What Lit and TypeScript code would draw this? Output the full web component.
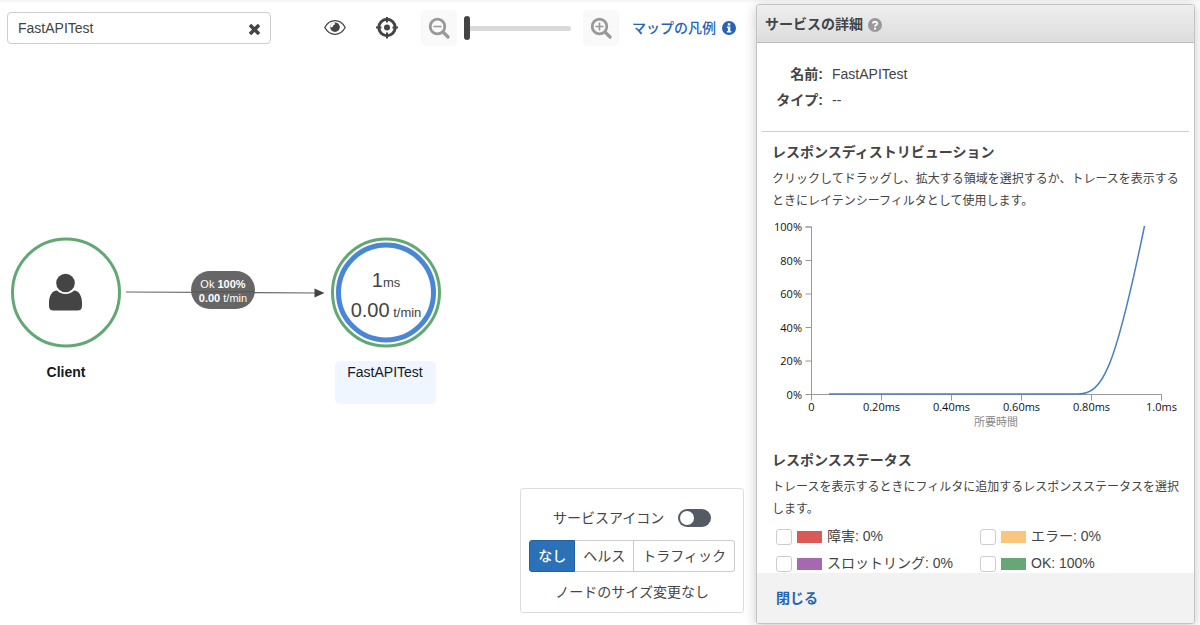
import { LitElement, html, css, svg } from "lit";
import { customElement, state } from "lit/decorators.js";
import { classMap } from "lit/directives/class-map.js";

const base = css`
  :host {
    display: block;
    box-sizing: border-box;
    font-family: "Liberation Sans", "Noto Sans CJK JP", sans-serif;
    font-size: 14px;
    line-height: 20px;
    color: #444;
  }
  *, *::before, *::after { box-sizing: border-box; }
  button { font: inherit; color: inherit; background: none; border: 0; padding: 0; margin: 0; cursor: pointer; }
  a { color: #2563b5; text-decoration: none; }
  svg { display: block; }
`;

@customElement("map-toolbar")
class MapToolbar extends LitElement {
  static styles = [base, css`
    .bar { display: flex; align-items: center; justify-content: space-between; gap: 16px; padding: 10px 20px 0 7px; }
    .search { display: flex; align-items: center; flex: 0 1 264px; min-width: 120px; height: 32px; padding: 0 10px; border: 1px solid #ccc; border-radius: 4px; background: #fff; }
    .search input { flex: 1; min-width: 0; border: 0; outline: 0; padding: 0; font: inherit; color: #444; background: none; }
    .clear { padding-top: 2px; }
    .tools { display: flex; align-items: center; }
    .view { display: flex; gap: 30px; margin-right: 23px; }
    .zoom { display: grid; place-items: center; width: 36px; height: 36px; border-radius: 5px; background: #f9f9f9; }
    .slider { appearance: none; width: 107px; height: 24px; margin: 0 12px 0 7px; background: none; }
    .slider::-webkit-slider-runnable-track { height: 5px; border-radius: 3px; background: #d9d9d9; }
    .slider::-webkit-slider-thumb { appearance: none; width: 6px; height: 24px; margin-top: -10px; border-radius: 3px; background: #444; }
    .legend { display: flex; align-items: center; gap: 6px; margin-left: 13px; white-space: nowrap; font-weight: 500; }
  `];
  private lens(plus: boolean) {
    return svg`<svg width="22" height="22" viewBox="0 0 22 22" fill="none" stroke="#999" aria-hidden="true">
      <circle cx="9.5" cy="9.5" r="7.3" stroke-width="2.8"/>
      <path d="M15 15L20 20" stroke-width="3.2" stroke-linecap="round"/>
      <path d=${plus ? "M5.5 9.5H13.5M9.5 5.5V13.5" : "M5.5 9.5H13.5"} stroke-width="1.6"/></svg>`;
  }
  render() {
    return html`<div class="bar">
      <div class="search">
        <input type="text" aria-label="サービス" .value=${"FastAPITest"}>
        <button class="clear" aria-label="クリア"><svg width="11" height="11" viewBox="0 0 10 10"><path d="M2 2L8 8M8 2L2 8" stroke="#444" stroke-width="3.2" stroke-linecap="square"/></svg></button>
      </div>
      <div class="tools">
        <div class="view">
          <button aria-label="表示"><svg width="22" height="22" viewBox="0 0 22 22" fill="none">
            <path d="M0.800 10.500C3.400 5.800 7 3.700 11 3.700S18.600 5.800 21.200 10.500C18.600 15.200 15 17.300 11 17.300S3.400 15.200 0.800 10.500Z" stroke="#444" stroke-width="1.3"/>
            <circle cx="11" cy="10.200" r="4.800" fill="#444"/><path d="M11 5.400A4.800 4.800 0 0 0 6.200 10.200H8.600A2.400 2.400 0 0 1 10.600 7.800Z" fill="#fff"/></svg></button>
          <button aria-label="中央に配置"><svg width="22" height="22" viewBox="0 0 22 22" fill="none">
            <circle cx="11" cy="10.500" r="8.200" stroke="#444" stroke-width="3"/>
            <path d="M11 0V5.500M11 15.500V21.500M0 10.500H5.500M16.500 10.500H22" stroke="#444" stroke-width="2"/>
            <circle cx="11" cy="10.500" r="3" fill="#444"/></svg></button>
        </div>
        <button class="zoom" aria-label="縮小">${this.lens(false)}</button>
        <input class="slider" type="range" min="0" max="100" .value=${"0"} aria-label="ズーム">
        <button class="zoom" aria-label="拡大">${this.lens(true)}</button>
        <a class="legend" href="#legend">マップの凡例
          <svg width="14" height="14" viewBox="0 0 14 14" aria-hidden="true"><circle cx="7" cy="7" r="7" fill="#2563b5"/><path d="M5.800 2.300H8.300V4.400H5.800ZM4.900 5.500H8.300V10H9.300V11.500H4.900V10H5.900V7H4.900Z" fill="#fff"/></svg></a>
      </div>
    </div>`;
  }
}

@customElement("service-graph")
class ServiceGraph extends LitElement {
  static styles = [base, css`
    .graph { max-width: 100%; font-size: 14px; }
    .ring { fill: #fff; stroke: #62a774; stroke-width: 3; }
    .inner { fill: #fff; stroke: #4a86d6; stroke-width: 5; }
    .mid { text-anchor: middle; }
    .name { fill: #16191f; }
    .strong { font-weight: 700; }
    .big { font-size: 20px; fill: #444; }
    .unit { font-size: 13px; }
    .edge { font-size: 11px; fill: #fff; }
  `];
  render() {
    return html`<svg class="graph" width="460" height="180" viewBox="0 230 460 180" role="img" aria-label="サービスマップ">
      <path d="M126 292L316 293" stroke="#666" stroke-width="1.200"/>
      <path d="M314.500 288.500L324.500 293L314.500 297.500Z" fill="#444"/>
      <rect x="191" y="271" width="64" height="38" rx="19" fill="#666"/>
      <path d="M192 291.800H254" stroke="#555" stroke-width="1"/>
      <g class="edge mid">
        <text x="223" y="288">Ok <tspan class="strong">100%</tspan></text>
        <text x="223" y="302"><tspan class="strong">0.00</tspan> t/min</text>
      </g>
      <circle class="ring" cx="66" cy="292.500" r="53.500"/>
      <circle cx="65.500" cy="283" r="9.300" fill="#444"/>
      <path d="M57 290.500C59 292.800 62 294 65.500 294S72 292.800 74 290.500C79 290.500 82 296 82 303V306Q82 310.500 77.500 310.500H53.500Q49 310.500 49 306V303C49 296 52 290.500 57 290.500Z" fill="#444"/>
      <text class="mid name strong" x="66" y="377">Client</text>
      <circle class="ring" cx="386" cy="292.500" r="53.500"/>
      <circle class="inner" cx="386" cy="292.500" r="47.500"/>
      <g class="big mid">
        <text x="386" y="287">1<tspan class="unit">ms</tspan></text>
        <text x="386" y="317">0.00<tspan class="unit"> t/min</tspan></text>
      </g>
      <rect x="335" y="361" width="101" height="43" rx="5" fill="#eff6ff"/>
      <text class="mid name" x="385" y="377">FastAPITest</text>
    </svg>`;
  }
}

@customElement("node-options")
class NodeOptions extends LitElement {
  @state() mode = 0;
  static styles = [base, css`
    .box { display: flex; flex-direction: column; align-items: center; padding: 19px 8px 10px; border: 1px solid #ddd; border-radius: 3px; background: #fff; }
    .row { display: flex; align-items: center; gap: 14px; }
    .switch { appearance: none; width: 33px; height: 18px; margin: 0; padding: 2px; border-radius: 9px; background: #545b64; }
    .switch::before { content: ""; display: block; width: 14px; height: 14px; border-radius: 50%; background: #fff; }
    .switch:checked::before { margin-left: 15px; }
    .group { display: flex; margin: 12px 0 10px; }
    .opt { height: 32px; padding: 0 8px; border: 1px solid #ccc; border-left-width: 0; white-space: nowrap; }
    .opt:first-child { border-left-width: 1px; border-radius: 3px 0 0 3px; }
    .opt:last-child { border-radius: 0 3px 3px 0; }
    .opt.on { background: #2a71b8; border-color: #2460a0; color: #fff; font-weight: 500; }
  `];
  render() {
    return html`<div class="box">
      <div class="row"><label for="icons">サービスアイコン</label><input id="icons" class="switch" type="checkbox" role="switch"></div>
      <div class="group">${["なし", "ヘルス", "トラフィック"].map((t, i) => html`<button class=${classMap({ opt: true, on: i === this.mode })} aria-pressed=${i === this.mode} @click=${() => (this.mode = i)}>${t}</button>`)}</div>
      <div>ノードのサイズ変更なし</div>
    </div>`;
  }
}

@customElement("latency-chart")
class LatencyChart extends LitElement {
  static styles = [base, css`
    .chart { width: 100%; height: auto; font-size: 11px; font-family: "Open Sans", "Noto Sans CJK JP", sans-serif; fill: #111; }
    .axis { fill: none; stroke: #999; }
    .end { text-anchor: end; }
    .mid { text-anchor: middle; }
    .title { fill: #888; }
    .line { fill: none; stroke: #4a80bd; stroke-width: 1.500; }
  `];
  render() {
    const ys = [0, 20, 40, 60, 80, 100];
    const xs = ["0", "0.20ms", "0.40ms", "0.60ms", "0.80ms", "1.0ms"];
    const y = (v: number) => 175.5 - v * 1.675;
    return html`<svg class="chart" viewBox="0 0 412 212" role="img" aria-label="レスポンスディストリビューション">
      <path class="axis" d="M33.500 8H39.500V175.500H389.500V181.500"/>
      ${ys.map((v) => svg`<path class="axis" d="M33.500 ${y(v)}H39.500"/><text class="end" x="30" y=${y(v) + 4}>${v}%</text>`)}
      ${xs.map((t, i) => svg`<path class="axis" d="M${39.5 + i * 70} 175.500V181.500"/><text class="mid" x=${39.5 + i * 70} y="192">${t}</text>`)}
      <path class="line" d="M57 175H306C331 175 343 150 372.500 7"/>
      <text class="mid title" x="224" y="207">所要時間</text>
    </svg>`;
  }
}

@customElement("service-details")
class ServiceDetails extends LitElement {
  static styles = [base, css`
    :host { display: flex; flex-direction: column; min-height: 0; border: 1px solid #c4c4c4; border-radius: 3px; background: #fff; box-shadow: 0 2px 12px rgba(0, 0, 0, 0.22); overflow: hidden; }
    .head { display: flex; align-items: center; gap: 5px; height: 38px; padding: 0 8px; background: linear-gradient(#eee, #ddd); border-bottom: 1px solid #bbb; }
    .help { margin-top: 2px; }
    h2, h3 { margin: 0; font-size: 14px; line-height: 20px; font-weight: 700; }
    .body { flex: 1; min-height: 0; padding: 0 5px; overflow-y: auto; scrollbar-width: none; }
    .facts { display: grid; grid-template-columns: 61px 1fr; column-gap: 9px; margin: 0; padding: 18px 0; line-height: 26px; border-bottom: 1px solid #ccc; }
    .facts dt { text-align: right; font-weight: 700; }
    .facts dd { margin: 0; }
    .section { padding: 10px 5px 0 10px; }
    .section p { margin: 6px 0 7px; font-size: 12px; line-height: 22px; }
    .section + .section { padding-top: 19px; }
    .section .tight { margin-bottom: 3px; }
    .statuses { display: grid; grid-template-columns: 1fr 1fr; padding-left: 4px; line-height: 27px; }
    .status { display: flex; align-items: center; gap: 5px; white-space: nowrap; }
    .status input { appearance: none; width: 16px; height: 16px; margin: 0; border: 1px solid #ccc; border-radius: 3px; background: #fff; }
    .swatch { width: 25px; height: 12px; }
    .red { background: #d95b58; }
    .orange { background: #f8c77d; }
    .purple { background: #a768b2; }
    .green { background: #67a777; }
    .foot { height: 50px; padding: 15px 19px; background: #f2f2f2; }
    .close { color: #2563b5; font-weight: 700; }
  `];
  render() {
    const statuses = [["red", "障害: 0%"], ["orange", "エラー: 0%"], ["purple", "スロットリング: 0%"], ["green", "OK: 100%"]];
    return html`
      <header class="head"><h2>サービスの詳細</h2>
        <svg class="help" width="14" height="14" viewBox="0 0 14 14" aria-hidden="true"><circle cx="7" cy="7" r="7" fill="#999"/><path d="M4.800 5.400C4.900 3.200 9.300 3.100 9.300 5.500C9.300 7.100 7 7 7 8.600" fill="none" stroke="#fff" stroke-width="1.800"/><rect x="6" y="9.700" width="2" height="1.900" fill="#fff"/></svg>
      </header>
      <div class="body">
        <dl class="facts"><dt>名前:</dt><dd>FastAPITest</dd><dt>タイプ:</dt><dd>--</dd></dl>
        <section class="section">
          <h3>レスポンスディストリビューション</h3>
          <p>クリックしてドラッグし、拡大する領域を選択するか、トレースを表示するときにレイテンシーフィルタとして使用します。</p>
          <latency-chart></latency-chart>
        </section>
        <section class="section">
          <h3>レスポンスステータス</h3>
          <p class="tight">トレースを表示するときにフィルタに追加するレスポンスステータスを選択します。</p>
          <div class="statuses">${statuses.map(([c, t]) => html`<label class="status"><input type="checkbox"><span class="swatch ${c}"></span>${t}</label>`)}</div>
        </section>
      </div>
      <footer class="foot"><button class="close">閉じる</button></footer>`;
  }
}

@customElement("app-root")
class AppRoot extends LitElement {
  static styles = [base, css`
    :host { background: #fff; }
    .page { display: grid; grid-template-columns: minmax(0, 63fr) minmax(0, 37fr); height: 100vh; background: linear-gradient(#f3f3f3, #fff 3px); overflow: hidden; }
    .map { display: flex; flex-direction: column; min-height: 0; }
    .canvas { flex: 1; min-height: 0; padding-top: 184px; }
    .options { align-self: flex-end; margin: 0 12px 12px 0; }
    .side { margin: 4px 5px 1px 0; }
  `];
  render() {
    return html`<div class="page">
      <main class="map">
        <map-toolbar></map-toolbar>
        <service-graph class="canvas"></service-graph>
        <node-options class="options"></node-options>
      </main>
      <service-details class="side"></service-details>
    </div>`;
  }
}
